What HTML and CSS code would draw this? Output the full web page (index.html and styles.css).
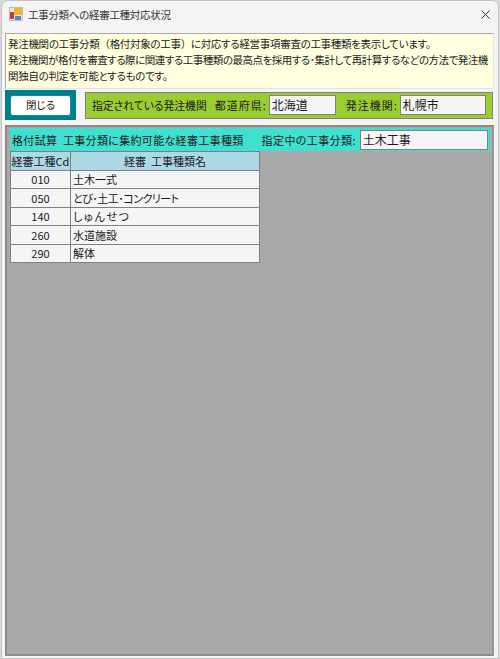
FILE: index.html
```html
<!DOCTYPE html>
<html lang="ja">

<head>
    <meta charset="UTF-8">
    <meta name="viewport" content="width=device-width, initial-scale=1.0">
    <link rel="stylesheet" href="styles.css">
    <title>工事分類への経審工種対応状況</title>
</head>

<body>
    <div class="window">
        <div class="titlebar">
            <svg class="app-icon" width="14" height="14" viewBox="0 0 14 14">
                <rect x="0.5" y="0.5" width="13" height="13" fill="#e8e8e8" stroke="#9a9a9a" stroke-width="0.6"/>
                <rect x="5" y="1" width="8" height="7" fill="#f2b632"/>
                <rect x="1" y="5" width="4" height="7" fill="#d8372c"/>
                <rect x="6" y="9" width="6" height="4" fill="#4f86d8"/>
            </svg>
            <span class="title">工事分類への経審工種対応状況</span>
            <svg class="close-x" width="9" height="9" viewBox="0 0 9 9">
                <path d="M0.5 0.5 L8.5 8.5 M8.5 0.5 L0.5 8.5" stroke="#333" stroke-width="1" fill="none"/>
            </svg>
        </div>

        <div class="content">
            <div class="notice">
                <p>発注機関の工事分類<span class="full">（</span>格付対象の工事<span class="full">）</span>に対応する経営事項審査の工事種類を表示しています。</p>
                <p class="long-line">発注機関が格付を審査する際に関連する工事種類の最高点を採用する･集計して再計算するなどの方法で発注機</p>
                <p>関独自の判定を可能とするものです。</p>
            </div>

            <div class="toolbar">
                <div class="close-wrap">
                    <button class="close-btn">閉じる</button>
                </div>
                <div class="agency">
                    <span class="agency-label">指定されている発注機関</span>
                    <span class="field-label pref-label">都道府県:</span>
                    <span class="field pref-field">北海道</span>
                    <span class="field-label org-label">発注機関:</span>
                    <span class="field org-field">札幌市</span>
                </div>
            </div>

            <div class="grid-panel">
                <div class="grid-head">
                    <span class="grid-title">格付試算&nbsp;&nbsp;工事分類に集約可能な経審工事種類</span>
                    <span class="current-label">指定中の工事分類:</span>
                    <span class="field current-field">土木工事</span>
                </div>
                <table class="kind-table">
                    <thead>
                        <tr>
                            <th class="col-code">経審工種Cd</th>
                            <th class="col-name">経審&nbsp;&nbsp;工事種類名</th>
                        </tr>
                    </thead>
                    <tbody>
                        <tr><td class="code">010</td><td>土木一式</td></tr>
                        <tr><td class="code">050</td><td class="tight">とび･土工･コンクリート</td></tr>
                        <tr><td class="code">140</td><td class="loose">しゅんせつ</td></tr>
                        <tr><td class="code">260</td><td>水道施設</td></tr>
                        <tr><td class="code">290</td><td>解体</td></tr>
                    </tbody>
                </table>
            </div>
        </div>
    </div>
</body>

</html>
```

FILE: styles.css
```css
* {
    margin: 0;
    padding: 0;
    box-sizing: border-box;
}

body {
    width: 500px;
    height: 659px;
    background: #d9d9d9;
    font-family: "Noto Sans CJK JP", "Noto Sans", sans-serif;
    font-size: 11px;
    font-feature-settings: "palt";
    color: #1a1a1a;
    overflow: hidden;
}

.window {
    width: 498px;
    height: 659px;
    margin-left: 1px;
    background: #f5f5f5;
    border: 1px solid #c4c4c4;
    border-radius: 7px 7px 0 0;
    display: flex;
    flex-direction: column;
}

.titlebar {
    height: 31px;
    flex-shrink: 0;
    display: flex;
    align-items: center;
    padding: 0 7px 5px;
    background: #f4f4f4;
    border-radius: 7px 7px 0 0;
}

.title {
    margin-left: 5px;
    font-size: 10.5px;
    letter-spacing: -0.3px;
    color: #333;
}

.close-x {
    margin-left: auto;
    margin-right: 1px;
}

.content {
    flex: 1;
    display: flex;
    flex-direction: column;
    padding: 1px 4px 2px 3px;
}

.notice {
    height: 56px;
    padding: 2px 2px 0;
    background: #ffffe0;
    border: 1px solid #a9a9a9;
    border-right-color: #e4e4e4;
    border-bottom-color: #e4e4e4;
    font-size: 10.5px;
    letter-spacing: -0.3px;
    line-height: 16px;
    white-space: nowrap;
}

.long-line {
    letter-spacing: -0.48px;
}

.full {
    font-feature-settings: normal;
}

.toolbar {
    display: flex;
    align-items: center;
    height: 30px;
    margin-top: 1px;
}

.close-wrap {
    width: 71px;
    height: 30px;
    background: #008080;
    display: flex;
    align-items: center;
    justify-content: center;
}

.close-btn {
    width: 61px;
    height: 21px;
    padding-bottom: 1px;
    background: #fff;
    border: 1px solid #0a84d8;
    border-radius: 3px;
    font: inherit;
    font-size: 10.5px;
    font-feature-settings: inherit;
    color: #222;
}

.agency {
    width: 408px;
    height: 27px;
    margin-left: 9px;
    display: flex;
    align-items: center;
    padding-left: 6px;
    background: #9acd32;
    border: 1px solid #808080;
}

.agency-label {
    font-size: 10.8px;
}

.field-label {
    letter-spacing: 1px;
}

.pref-label {
    margin-left: 8px;
}

.org-label {
    margin-left: 10px;
}

.field {
    height: 20px;
    line-height: 18px;
    padding-left: 2px;
    background: #f5f5f5;
    border: 1px solid #808080;
    font-size: 12px;
}

.pref-field {
    width: 67px;
    margin-left: 2px;
}

.org-field {
    width: 86px;
    margin-left: 2px;
}

.grid-panel {
    flex: 1;
    margin-top: 5px;
    padding: 1px 2px 1px 3px;
    background: #a9a9a9;
    border: 2px solid #8c8c8c;
    border-right-color: #999;
}

.grid-head {
    height: 23px;
    display: flex;
    align-items: center;
    padding: 0 2px;
    background: #40e0d0;
}

.grid-title {
    letter-spacing: 0.33px;
}

.current-label {
    margin-left: 18px;
    letter-spacing: 0.4px;
}

.current-field {
    width: 128px;
    margin-left: 4px;
}

.kind-table {
    border-collapse: collapse;
    table-layout: fixed;
    width: 250px;
    border: 1px solid #696969;
    background: #f5f5f5;
}

.kind-table th,
.kind-table td {
    height: 18.5px;
    border: 1px solid #808080;
    font-weight: normal;
    line-height: 16px;
    white-space: nowrap;
}

.kind-table th {
    background: #add8e6;
    text-align: center;
}

.kind-table td {
    padding-left: 2px;
}

.col-code {
    width: 60px;
}

.kind-table .code {
    padding-left: 0;
    text-align: center;
}

.kind-table .tight {
    letter-spacing: -0.5px;
}

.kind-table .loose {
    letter-spacing: 1.6px;
}
```
